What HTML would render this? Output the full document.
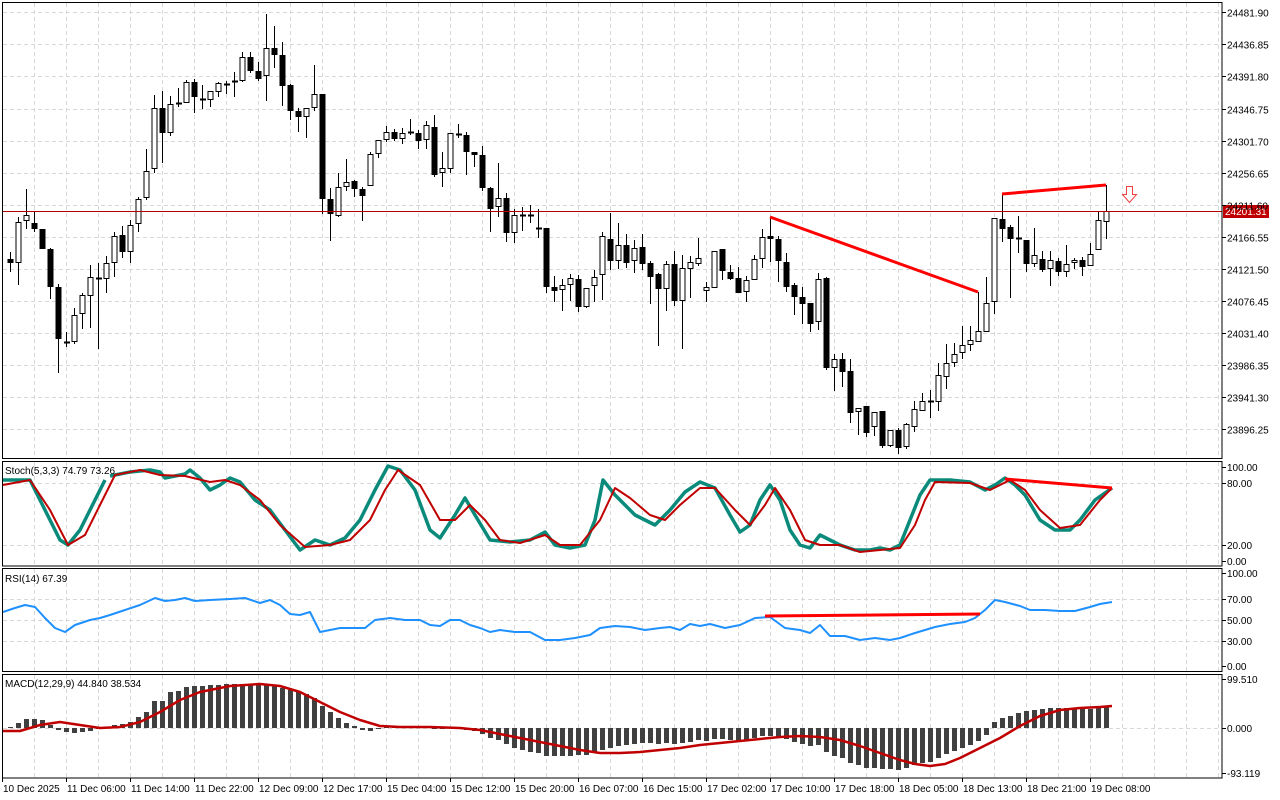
<!DOCTYPE html>
<html><head><meta charset="utf-8"><style>
html,body{margin:0;padding:0;background:#fff;}
svg{display:block;}
text{font-family:"Liberation Sans",sans-serif;font-size:10px;fill:#000;}
</style></head><body>
<svg id="s" width="1280" height="800" xmlns="http://www.w3.org/2000/svg">
<rect width="1280" height="800" fill="#fff"/>
<g id="grid" stroke="#d8d8d8" stroke-dasharray="4,3" stroke-width="1"></g>
<g id="main"></g>
<line x1="2" y1="211.5" x2="1222" y2="211.5" stroke="#b00000" stroke-width="1"/>
<polyline points="770,217 978,292" stroke="#f00" stroke-width="3" fill="none"/>
<polyline points="1002,194 1106,185" stroke="#f00" stroke-width="3" fill="none"/>
<path d="M1126.5,186.5 h6 v8 h4 l-7,8 l-7,-8 h4 z" fill="#fff" stroke="#f04040" stroke-width="1"/>
<g id="ind"></g>
<g fill="none" stroke="#000" stroke-width="1">
<rect x="2.5" y="2.5" width="1219.5" height="456"/>
<rect x="2.5" y="461.5" width="1219.5" height="104.5"/>
<rect x="2.5" y="568.5" width="1219.5" height="103"/>
<rect x="2.5" y="674.5" width="1219.5" height="103.5"/>
</g>
<rect x="1223" y="205" width="46" height="13" fill="#c00000"/>
<text x="1225" y="215" style="fill:#fff">24201.31</text>
<g id="axis"></g>
<text x="5" y="474">Stoch(5,3,3) 74.79 73.26</text>
<text x="5" y="582">RSI(14) 67.39</text>
<text x="5" y="687">MACD(12,29,9) 44.840 38.534</text>
</svg>
<script>
var NS="http://www.w3.org/2000/svg";
function el(p,t,a){var e=document.createElementNS(NS,t);for(var k in a)e.setAttribute(k,a[k]);p.appendChild(e);return e;}
var grid=document.getElementById('grid'),main=document.getElementById('main'),ind=document.getElementById('ind'),axis=document.getElementById('axis');
// vertical grid
for(var x=34;x<1222;x+=32){
 [[3,458],[462,566],[569,671],[675,778]].forEach(function(r){el(grid,'line',{x1:x+.5,y1:r[0],x2:x+.5,y2:r[1]});});
}
// horizontal main grid + labels
var pr=["24481.90","24436.85","24391.80","24346.75","24301.70","24256.65","24211.60","24166.55","24121.50","24076.45","24031.40","23986.35","23941.30","23896.25"];
pr.forEach(function(p,i){var y=Math.round(12.3+32.08*i)+.5;el(grid,'line',{x1:3,y1:y,x2:1221,y2:y});
 el(axis,'line',{x1:1222,y1:y,x2:1226,y2:y,stroke:'#000'});if(p!="24211.60"||true){var t=el(axis,'text',{x:1227,y:y+4});t.textContent=p;}});
// sub-panel grids
[[483,"80.00"],[545,"20.00"],[599,"70.00"],[620,"50.00"],[641,"30.00"],[728,"0.000"]].forEach(function(a){el(grid,'line',{x1:3,y1:a[0]+.5,x2:1221,y2:a[0]+.5});});
[[467,"100.00"],[483,"80.00"],[545,"20.00"],[561,"0.00"],[573,"100.00"],[599,"70.00"],[620,"50.00"],[641,"30.00"],[666,"0.00"],[679,"99.510"],[728,"0.000"],[773,"-93.119"]].forEach(function(a){
 el(axis,'line',{x1:1222,y1:a[0]+.5,x2:1226,y2:a[0]+.5,stroke:'#000'});var t=el(axis,'text',{x:1227,y:a[0]+4});t.textContent=a[1];});
// date labels
var d=["10 Dec 2025","11 Dec 06:00","11 Dec 14:00","11 Dec 22:00","12 Dec 09:00","12 Dec 17:00","15 Dec 04:00","15 Dec 12:00","15 Dec 20:00","16 Dec 07:00","16 Dec 15:00","17 Dec 02:00","17 Dec 10:00","17 Dec 18:00","18 Dec 05:00","18 Dec 13:00","18 Dec 21:00","19 Dec 08:00"];
d.forEach(function(s,i){var x=2+64*i;el(axis,'line',{x1:x+.5,y1:778,x2:x+.5,y2:782,stroke:'#000'});var t=el(axis,'text',{x:x+1,y:792});t.textContent=s;});
// candles: [bodyTop, bodyBot, high, low, bull]
var C=[[252,259,250,262,0],[259,263,252,272,0],[222,263,217,285,1],[215,221,189,229,1],[223,229,211,232,0],[229,249,229,249,0],[249,287,248,299,0],[287,339,284,373,0],[342,342,332,347,0],[315,342,308,344,1],[295,314,293,329,1],[277,296,265,328,1],[278,278,263,349,0],[263,279,256,293,1],[236,263,232,277,1],[235,252,226,258,0],[225,252,220,263,1],[199,224,197,232,1],[171,198,149,200,1],[108,169,95,173,1],[108,133,91,163,0],[104,133,96,136,1],[103,105,88,107,1],[82,103,80,103,1],[82,97,79,113,0],[99,99,85,109,0],[91,100,91,107,1],[83,92,82,97,1],[84,84,81,94,0],[81,83,72,97,1],[57,81,52,82,1],[57,71,52,73,0],[71,79,62,81,0],[48,76,14,101,1],[48,55,26,68,0],[55,86,42,106,0],[85,111,84,120,0],[111,117,108,132,0],[108,117,108,138,1],[94,108,65,111,1],[94,199,94,214,0],[199,214,188,241,0],[187,216,173,217,1],[182,187,159,191,1],[181,189,180,197,0],[189,196,187,221,0],[154,186,152,186,1],[140,154,140,158,1],[132,140,126,142,1],[132,139,129,141,0],[133,139,128,144,1],[132,134,119,135,1],[133,141,130,149,0],[125,140,121,149,1],[127,175,115,177,0],[168,173,152,187,1],[133,169,133,173,1],[134,134,124,138,0],[135,152,132,175,0],[152,155,152,167,0],[155,188,146,191,0],[188,209,187,232,0],[198,207,163,217,1],[198,233,193,242,0],[215,233,209,243,1],[215,215,207,231,0],[215,215,205,223,0],[228,228,209,238,0],[228,287,228,293,0],[287,291,276,302,0],[285,290,279,311,1],[278,285,274,301,1],[279,307,275,312,0],[288,307,288,308,1],[277,286,270,302,1],[236,275,232,300,1],[239,261,213,270,0],[245,261,223,269,1],[245,263,234,268,0],[248,261,240,273,1],[247,264,234,270,0],[263,277,261,304,0],[274,289,273,346,0],[264,289,261,311,1],[264,301,251,306,0],[268,301,255,349,1],[262,269,256,298,1],[258,264,238,266,1],[287,291,282,302,1],[251,288,251,288,1],[249,271,249,280,0],[272,279,265,280,0],[278,293,267,293,0],[280,292,276,302,1],[259,280,255,280,1],[237,259,229,268,1],[236,239,217,262,0],[239,261,236,282,0],[262,287,253,292,0],[285,297,283,315,0],[297,304,287,324,0],[303,324,303,332,0],[279,322,273,330,1],[278,368,277,370,0],[359,368,354,391,1],[359,372,353,387,0],[371,413,359,423,0],[408,412,408,435,1],[406,433,406,437,0],[412,427,412,436,1],[411,446,411,448,0],[430,446,430,447,1],[430,448,428,454,0],[424,447,423,449,1],[409,427,401,432,1],[401,411,393,411,1],[401,403,390,418,0],[375,402,363,411,1],[363,377,344,389,1],[354,363,343,367,1],[345,353,326,359,1],[340,345,326,351,1],[331,342,292,342,1],[303,332,277,332,1],[218,302,218,314,1],[219,229,194,242,0],[227,239,225,298,0],[238,240,216,253,0],[240,264,240,272,0],[255,264,228,267,1],[259,270,251,272,0],[260,269,251,286,1],[261,272,258,276,0],[264,272,245,277,1],[260,263,258,269,1],[260,267,257,276,0],[254,266,243,266,1],[220,250,211,250,1],[211,222,185,239,1]];
C.forEach(function(c,k){var x=2+8*k;if(x<3)return;
 el(main,'line',{x1:x+.5,y1:c[2],x2:x+.5,y2:c[3],stroke:'#000','stroke-width':1});
 var h=Math.max(c[1]-c[0],1);
 if(h<=2){el(main,'rect',{x:x-2,y:c[0]-.5,width:6,height:2,fill:'#000'});}
 else if(c[4])el(main,'rect',{x:x-2,y:c[0]+.5,width:5,height:h-1,fill:'#fff',stroke:'#000','stroke-width':1});
 else el(main,'rect',{x:x-2.5,y:c[0],width:6,height:h,fill:'#000'});
});
function pl(pts,col,w){el(ind,'polyline',{points:pts,fill:'none',stroke:col,'stroke-width':w,'stroke-linejoin':'round'});}
// MACD histogram
var M=[0,1,5,9,9,8,3,-2,-4,-5,-4,-3,-1,1,3,4,6,11,16,27,27,36,37,41,42,42,43,43,44,44,44,44,43,44,43,40,38,36,34,30,22,16,10,5,2,-2,-3,-1,1,1,1,2,2,2,-1,-1,0,0,-2,-3,-6,-10,-12,-16,-20,-22,-24,-25,-28,-28,-28,-28,-27,-27,-25,-22,-20,-18,-17,-16,-15,-15,-16,-15,-16,-15,-14,-12,-13,-11,-11,-12,-13,-12,-10,-8,-8,-9,-11,-14,-16,-18,-17,-24,-28,-30,-35,-37,-40,-40,-41,-41,-42,-40,-37,-35,-34,-30,-26,-23,-20,-17,-13,-7,6,10,12,15,17,18,19,20,20,20,20,20,19,20,22];
M.forEach(function(v,k){var x=2+8*k;if(x<3||v==0)return;var y0=728;el(ind,'rect',{x:x-2,y:v>0?y0-v:y0,width:5,height:Math.abs(v),fill:'#404040'});});
pl("3,731 20,731 40,725 60,722 80,725 100,728 120,727 140,722 160,712 180,700 200,692 230,686 260,684 280,686 300,692 320,702 340,712 360,720 380,726 400,727 430,727 460,728 480,730 500,734 520,738 540,742 560,746 580,750 600,753 620,753 640,752 660,750 680,748 700,745 720,743 740,741 760,739 780,737 800,736 820,737 840,740 860,746 880,753 900,760 915,764 930,766 945,764 960,758 980,748 1000,738 1020,726 1040,716 1060,710 1080,708 1100,707 1112,706","#c00000",2.5);
// RSI
pl("3,612 15,608 25,605 35,607 45,618 55,628 65,632 75,625 90,620 100,618 110,615 125,610 140,605 155,598 165,601 175,600 185,598 195,601 210,600 230,599 245,598 260,603 270,600 280,605 290,614 300,615 310,612 320,632 330,630 340,628 355,628 365,628 375,620 390,618 405,620 420,620 430,625 440,626 450,620 460,620 470,625 480,628 490,632 500,630 515,632 530,632 545,640 560,640 575,638 590,635 600,628 615,626 630,627 645,630 660,628 670,627 680,630 690,624 700,626 710,624 725,628 740,625 755,618 770,617 785,628 800,630 810,633 820,625 830,636 845,636 860,640 875,638 890,640 900,638 915,633 925,630 935,627 950,624 965,622 975,618 985,610 995,600 1005,602 1020,606 1030,610 1045,610 1060,611 1075,611 1090,607 1100,604 1112,602","#1e90ff",2);
pl("765,616 980,614","#f00",3);
// Stoch
pl("3,480 30,480 45,510 60,540 68,545 80,530 95,500 105,480","#0a8a7a",3.5);
pl("110,476 130,472 150,470 160,472 165,478 175,476 185,474 190,470 200,478 210,490 220,485 230,478 240,482 255,500 270,510 285,530 300,550 315,540 330,545 345,538 360,520 375,490 388,466 400,470 415,490 430,530 440,538 455,515 465,498 475,515 490,540 510,542 530,540 545,532 555,545 570,548 585,545 595,520 603,480 615,495 625,505 635,515 645,520 655,525 670,510 685,492 700,482 715,488 730,515 740,532 750,525 760,500 770,485 780,500 790,530 800,545 810,548 820,535 830,540 840,545 855,550 870,550 880,548 890,550 900,545 910,520 920,495 930,480 950,480 970,482 985,490 995,485 1005,478 1015,485 1025,495 1040,520 1055,530 1070,530 1080,520 1095,500 1112,488","#0a8a7a",3.5);
pl("3,485 30,480 50,510 68,545 85,535 100,505 115,475 140,470 160,475 185,476 210,482 225,480 240,485 260,500 280,525 305,547 330,545 350,540 370,520 385,490 398,470 420,485 440,520 455,520 470,505 485,520 500,540 520,543 545,535 560,545 580,545 600,520 615,488 630,498 650,515 665,520 680,505 700,488 715,488 735,510 750,525 765,505 775,488 790,510 805,540 820,545 840,545 860,552 880,550 900,548 915,525 925,500 935,482 970,483 990,490 1010,480 1025,490 1040,510 1060,528 1080,525 1100,500 1112,488","#c00000",2);
pl("1005,479 1112,488","#f00",3);
</script>
</body></html>
